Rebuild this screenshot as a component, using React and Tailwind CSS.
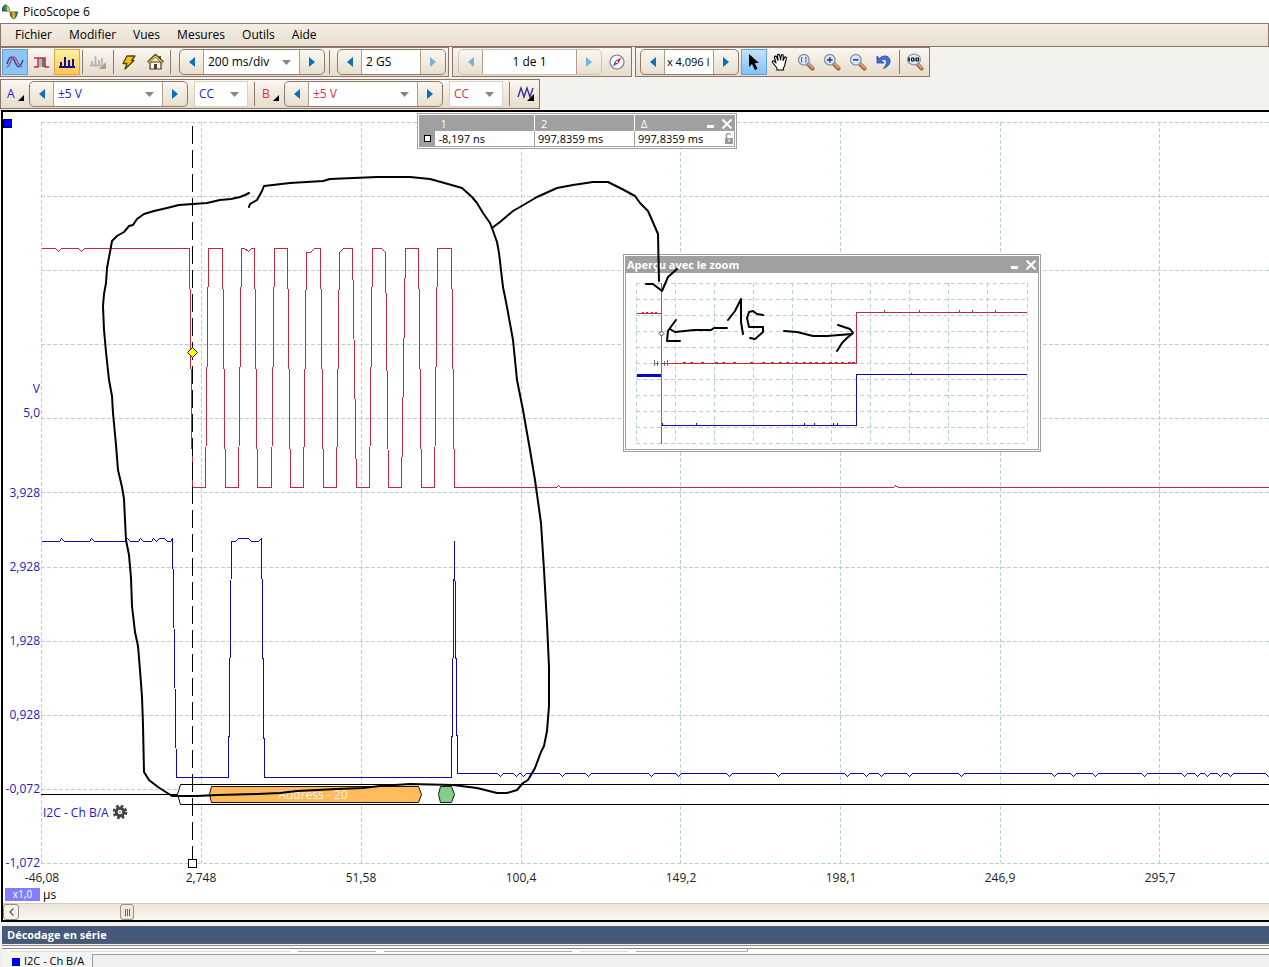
import React from "react";
import { useState } from "react";

const gridX = [41, 201, 361, 521, 680, 840, 1000, 1159, 1319, 1479, 1639, 1799];
const gridY = [122, 196, 270, 344, 418, 492, 567, 641, 715, 789, 863];

const xLabels = [
  { x: 42, text: "-46,08" },
  { x: 201, text: "2,748" },
  { x: 361, text: "51,58" },
  { x: 521, text: "100,4" },
  { x: 681, text: "149,2" },
  { x: 841, text: "198,1" },
  { x: 1000, text: "246,9" },
  { x: 1160, text: "295,7" },
];

const yLabels = [
  { y: 393, text: "V" },
  { y: 417, text: "5,0" },
  { y: 497, text: "3,928" },
  { y: 571, text: "2,928" },
  { y: 645, text: "1,928" },
  { y: 719, text: "0,928" },
  { y: 793, text: "-0,072" },
  { y: 867, text: "-1,072" },
];

const redTrace =
  "41,248 55,248 58,251 61,248 78,248 81,251 84,248 189,248 192,487 205,487 208,248 222,248 225,487 238,487 241,248 244,248 248,251 251,248 254,248 257,487 271,487 274,248 287,248 290,487 303,487 306,252 310,252 314,248 320,248 323,487 336,487 339,252 343,248 352,248 356,487 369,487 372,248 381,248 385,252 388,487 401,487 405,248 418,248 421,487 434,487 437,248 451,248 454,487 556,487 558,485 560,487 893,487 895,485 898,487 2000,487";

const blueStart =
  "41,541 59,541 61,538 64,541 89,541 91,538 94,541 125,541 127,538 130,541 138,541 140,538 143,541 151,541 153,538 156,541 159,538 164,538 167,541 170,541 172,538 176,777 228,777 231,541 235,541 238,538 248,538 251,541 258,541 261,538 264,777 451,777 454,541 457,773";

const dips = [500, 516, 523, 562, 588, 651, 678, 729, 778, 847, 866, 881, 909, 961, 1054, 1073, 1095, 1144, 1184, 1197, 1207, 1220, 1230, 1268];
const blueTrace =
  blueStart + " " + dips.map((x) => `${x - 3},773 ${x},776 ${x + 3},773`).join(" ") + " 2000,773";

// freehand notes drawn over the capture
const notes = [
  "249,193 245,195 240,197 231,199 220,200 207,203 193,204 179,205 167,208 154,211 144,214 137,219 133,225 129,226 124,232 117,236 112,241 110,252 107,268 106,283 104,294 103,306 104,330 106,352 109,380 112,396 113,413 116,445 118,470 122,487 124,499 125,520 126,540 129,555 131,578 132,606 135,632 138,646 140,670 142,697 143,725 144,772 149,780 158,787 172,796 197,796 217,795 257,794 280,793 297,791 337,789 363,788 380,786 410,784 453,785 477,788 497,793 507,793 517,790 523,783 528,780 535,768 541,752 544,746 547,731 549,706 549,667 547,623 544,570 541,523 535,480 530,450 523,410 517,380 513,340 507,307 503,287 499,253 497,242 492,228 490,223 483,213 477,203 472,197 462,188 448,184 430,179 410,177 377,177 330,179 323,181 290,183 264,186 262,191 257,200 250,204 249,207",
  "492,228 500,222 513,211 520,207 537,197 557,188 573,185 593,182 608,182 622,189 635,196 640,203 648,211 655,227 658,234 659,281",
  "646,284 653,284 662,291 668,277 677,269",
  "727,328 714,328 711,330 694,330 675,332 670,329",
  "676,320 670,328 668,331 667,341 680,341",
  "728,320 735,311 741,299 741,322 743,334",
  "763,315 757,314 753,311 749,312 747,318 749,327 763,327 763,332 755,339 750,338",
  "784,331 797,332 813,336 827,336 852,334",
  "838,325 850,329 853,333 847,338 842,343 837,351",
];

function Triangle({ dir, dim }) {
  return (
    <svg width="6" height="10" viewBox="0 0 6 10" aria-hidden="true">
      <path d={dir === "left" ? "M6 0v10L0 5z" : "M0 0v10l6-5z"} fill={dim ? "#7db2d6" : "#0a70b8"} />
    </svg>
  );
}

function Combo({ label, options, color = "text-black", width, frame = "" }) {
  return (
    <div className={`grid items-center bg-white ${width} ${frame}`}>
      <select
        aria-label={label}
        className={`col-start-1 row-start-1 h-full w-full appearance-none bg-transparent pl-1 text-[12px] leading-6 outline-none ${color}`}
      >
        {options.map((o) => (
          <option key={o}>{o}</option>
        ))}
      </select>
      <svg className="pointer-events-none col-start-1 row-start-1 mr-2 justify-self-end" width="9" height="5" viewBox="0 0 9 5" aria-hidden="true">
        <path d="M0 0h9L4.500 5z" fill="#888480" />
      </svg>
    </div>
  );
}

function Field({ label, value, width, align = "text-left" }) {
  const [text, setText] = useState(value);
  return (
    <input
      aria-label={label}
      value={text}
      onChange={(e) => setText(e.target.value)}
      className={`bg-white outline-none ${width} ${align}`}
    />
  );
}

function Spinner({ label, children, leftDim, rightDim }) {
  return (
    <div
      className={`flex h-[26px] overflow-hidden rounded-[5px] border bg-gradient-to-b from-[#faf7f1] to-[#e8dfce] ${
        leftDim && rightDim ? "border-[#cfc4b4]" : "border-[#8d7a6a]"
      }`}
    >
      <button aria-label={`${label} -`} className="flex w-6 items-center justify-center border-r border-[#b0a090]">
        <Triangle dir="left" dim={leftDim} />
      </button>
      {children}
      <button aria-label={`${label} +`} className="flex w-[25px] items-center justify-center border-l border-[#b0a090]">
        <Triangle dir="right" dim={rightDim} />
      </button>
    </div>
  );
}

function Tool({ label, active = "", children }) {
  return (
    <button aria-label={label} className={`flex size-[26px] shrink-0 items-center justify-center ${active}`}>
      {children}
    </button>
  );
}

function Group({ children }) {
  return (
    <div className="flex h-[30px] shrink-0 items-center border border-[#8d7468] bg-gradient-to-b from-[#faf7f1] to-[#e6dcca] px-px">
      {children}
    </div>
  );
}

function Sep() {
  return <div className="mx-0.5 h-6 w-px shrink-0 bg-[#8d7a6a]" />;
}

function Lens({ children }) {
  return (
    <svg width="18" height="18" viewBox="0 0 18 18" aria-hidden="true">
      <path d="M10.500 10.500l5 5" stroke="#8a5a3c" strokeWidth="4" strokeLinecap="round" />
      <path d="M10.800 10.200l4.800 4.800" stroke="#e09a66" strokeWidth="2.400" strokeLinecap="round" />
      <circle cx="6.800" cy="6.800" r="5.300" fill="#dcebf7" stroke="#8797aa" strokeWidth="1.400" />
      {children}
    </svg>
  );
}

function MenuBar() {
  return (
    <nav className="flex h-6 shrink-0 items-center gap-[17px] border border-[#8d7468] bg-gradient-to-b from-[#f3eee4] to-[#e8dfd0] pl-[14px]">
      {["Fichier", "Modifier", "Vues", "Mesures", "Outils", "Aide"].map((m) => (
        <button key={m}>{m}</button>
      ))}
    </nav>
  );
}

function MainTools() {
  return (
    <div className="flex gap-[3px]">
      <Group>
        <Tool label="Oscilloscope" active="border border-[#5ba4dd] bg-[#8cc6f6]">
          <svg width="18" height="14" viewBox="0 0 18 14" fill="none" aria-hidden="true">
            <path d="M1 9C4 0 6 0 9 7s5 6 8-2" stroke="#2a48b0" strokeWidth="1.500" />
            <path d="M1 12C4 12 5 2 8 2s4 10 8 10" stroke="#c84a78" strokeWidth="1.500" />
          </svg>
        </Tool>
        <Tool label="Persistance">
          <svg width="17" height="13" viewBox="0 0 17 13" fill="none" aria-hidden="true">
            <path d="M6 2h6v9H6z" fill="#a4bcc9" />
            <path d="M9 2h3v9H9z" fill="#4e7f96" />
            <path d="M1 11h4V2h7v9h4M1 2h4" stroke="#d02a34" strokeWidth="1.500" />
          </svg>
        </Tool>
        <Tool label="Spectre" active="border border-[#e0a838] bg-gradient-to-b from-[#fff0a8] to-[#ffc94a]">
          <svg width="16" height="12" viewBox="0 0 16 12" fill="none" stroke="#111188" strokeWidth="2" aria-hidden="true">
            <path d="M0 11h16M2 11V6M6 11V1M10 11V4M14 11V3" />
          </svg>
        </Tool>
        <Sep />
        <Tool label="Options du canal">
          <svg width="16" height="14" viewBox="0 0 16 14" fill="none" aria-hidden="true">
            <path d="M0 10.500h12M2 10V6M5.500 10V1M9 10V5M12 10V3" stroke="#b9b4ae" strokeWidth="1.800" />
            <path d="M16 7v7H9z" fill="#a39e98" />
          </svg>
        </Tool>
        <Sep />
        <Tool label="Configuration automatique">
          <svg width="14" height="15" viewBox="0 0 14 15" aria-hidden="true">
            <path d="M5 1h8L9.500 5.500H12L3 14l2-5.500H1z" fill="#f2c21a" stroke="#5d3b0c" strokeWidth="1.300" strokeLinejoin="round" />
          </svg>
        </Tool>
        <Tool label="Accueil">
          <svg width="17" height="16" viewBox="0 0 17 16" aria-hidden="true">
            <path d="M12 2h2v5h-2z" fill="#7c4a28" />
            <path d="M3 8h11v7H3z" fill="#fff6cc" stroke="#4a3a20" strokeWidth="1.200" />
            <path d="M1 8.500L8.500 1.500 16 8.500" fill="none" stroke="#4a3a20" strokeWidth="3" />
            <path d="M1.500 8.500L8.500 2l7 6.500" fill="none" stroke="#f3d24c" strokeWidth="1.200" />
            <path d="M7 10h3v5H7z" fill="#33415c" />
          </svg>
        </Tool>
        <Sep />
        <div className="w-1.5" />
        <Spinner label="Base de temps">
          <Combo label="Base de temps" width="w-[95px]" options={["200 ms/div", "500 ms/div"]} />
        </Spinner>
        <div className="w-0.5" />
        <Sep />
        <div className="w-[5px]" />
        <Spinner label="Échantillons" rightDim>
          <Field label="Échantillons" value="2 GS" width="w-[58px] pl-1" />
        </Spinner>
        <div className="w-px" />
      </Group>
      <Group>
        <div className="w-1" />
        <Spinner label="Tampon" leftDim rightDim>
          <Field label="Tampon" value="1 de 1" width="w-[93px]" align="text-center" />
        </Spinner>
        <div className="w-0.5" />
        <Tool label="Navigateur de tampons">
          <svg width="16" height="16" viewBox="0 0 16 16" aria-hidden="true">
            <circle cx="8" cy="8" r="7" fill="#fff" stroke="#6f7890" strokeWidth="1.200" />
            <path d="M12.500 3.500L9.500 9.500 6.500 6.500z" fill="#e03434" />
            <path d="M3.500 12.500l3-6 3 3z" fill="#4668c4" />
            <circle cx="8" cy="8" r="1" fill="#fff" />
          </svg>
        </Tool>
      </Group>
      <Group>
        <div className="w-[3px]" />
        <Spinner label="Zoom">
          <Field label="Zoom" value="x 4,096 I" width="w-12 pl-0.5 text-[11px]" />
        </Spinner>
        <div className="w-0.5" />
        <Tool label="Sélection" active="border border-[#5ba4dd] bg-gradient-to-b from-[#c4e2fb] to-[#84c0f6]">
          <svg width="12" height="17" viewBox="0 0 12 17" aria-hidden="true">
            <path d="M1 0v13l3-3 3 6 2.500-1.200L6.700 9H11z" fill="#000" />
          </svg>
        </Tool>
        <Tool label="Main">
          <svg width="18" height="18" viewBox="0 0 18 18" aria-hidden="true">
            <path
              d="M6 17v-2L1.500 9.500c-.8-1.200.8-2.300 2-1.200L5 10 3.500 4.500c-.3-1.500 1.500-2 2-.5L7 7.500 6.500 2.500c0-1.500 2-1.500 2.300 0L9.500 7l.8-4.500c.3-1.300 2.100-1 2 .5L12 7.500l1.500-3c.7-1.200 2.200-.5 1.800 1L14 11c0 2-1 3-1.500 4v2z"
              fill="#fff"
              stroke="#000"
              strokeWidth="1.100"
              strokeLinejoin="round"
            />
          </svg>
        </Tool>
        <Tool label="Zoom sur une zone">
          <Lens>
            <path d="M5.500 4.500h-1v4.500h1M8 4.500h1v4.500h-1" fill="none" stroke="#4458a0" />
          </Lens>
        </Tool>
        <Tool label="Zoom avant">
          <Lens>
            <path d="M4 6.800h5.600M6.800 4v5.600" stroke="#3a4a9c" strokeWidth="1.800" />
          </Lens>
        </Tool>
        <Tool label="Zoom arrière">
          <Lens>
            <path d="M4 6.800h5.600" stroke="#3a4a9c" strokeWidth="1.800" />
          </Lens>
        </Tool>
        <Tool label="Annuler le zoom">
          <svg width="16" height="16" viewBox="0 0 16 16" aria-hidden="true">
            <path d="M1 2v7h7L5.500 6.500c2-2 5-1.500 5 1.500 0 2-1 4-3 6.500 5-2 7-5 6.500-8.500C13.300 1.500 7 .5 3.500 4.500z" fill="#3f6fd8" stroke="#2745a0" strokeWidth=".8" />
          </svg>
        </Tool>
        <Sep />
        <Tool label="Zoom 100">
          <svg width="18" height="18" viewBox="0 0 18 18" aria-hidden="true">
            <path d="M11 10.500l4.500 5" stroke="#8a5a3c" strokeWidth="4" strokeLinecap="round" />
            <path d="M11.300 10.300l4.300 4.700" stroke="#e09a66" strokeWidth="2.400" strokeLinecap="round" />
            <ellipse cx="8" cy="6.500" rx="6.500" ry="5.300" fill="#dcebf7" stroke="#8797aa" strokeWidth="1.200" />
            <path d="M3 4.500v4" stroke="#000" strokeWidth="1.400" />
            <rect x="5.500" y="5" width="2.500" height="3" rx=".8" fill="none" stroke="#000" strokeWidth="1.200" />
            <rect x="10" y="5" width="2.500" height="3" rx=".8" fill="none" stroke="#000" strokeWidth="1.200" />
          </svg>
        </Tool>
      </Group>
    </div>
  );
}

function Channel({ name, color }) {
  return (
    <>
      <button aria-label={`Canal ${name}`} className={`flex w-[27px] items-center justify-between px-[5px] ${color}`}>
        {name}
        <svg className="mt-2" width="6" height="6" viewBox="0 0 6 6" aria-hidden="true">
          <path d="M6 0v6H0z" fill="#000" />
        </svg>
      </button>
      <Spinner label={`Plage ${name}`}>
        <Combo label={`Plage ${name}`} width="w-[108px]" options={["±5 V", "±10 V"]} color={color} />
      </Spinner>
      <div className="w-1.5" />
      <Combo label={`Couplage ${name}`} width="h-[26px] w-[54px]" frame="border border-[#d8cfc0]" options={["CC", "CA"]} color={color} />
      <div className="w-1" />
      <Sep />
    </>
  );
}

function ChannelTools() {
  return (
    <div className="flex">
      <Group>
        <Channel name="A" color="text-[#2a20d0]" />
        <Channel name="B" color="text-[#dc3048]" />
        <Tool label="Canaux numériques">
          <svg width="17" height="16" viewBox="0 0 17 16" fill="none" aria-hidden="true">
            <path d="M1 11L4 2l3 9 3-9 3 9 3-9" stroke="#34349a" strokeWidth="1.400" />
            <path d="M17 8v7h-7z" fill="#000" />
          </svg>
        </Tool>
      </Group>
    </div>
  );
}

function Scope() {
  return (
    <svg className="absolute inset-0 size-full" aria-label="Signal">
      <g transform="translate(-3 -112)" fontSize="12">
        <g stroke="#b2d3de" strokeDasharray="4 2" shapeRendering="crispEdges">
          {gridX.map((x) => (
            <path key={x} d={`M${x + 0.5} 122V863`} />
          ))}
          {gridY.map((y) => (
            <path key={y} d={`M41 ${y + 0.5}H2000`} />
          ))}
        </g>
        <rect x="3" y="119" width="9" height="9" fill="#000060" />
        <rect x="4" y="120" width="7" height="7" fill="#0000ff" />

        <g fill="none" shapeRendering="crispEdges">
          <polyline points={redTrace} stroke="#c8283c" transform="translate(.5 .5)" />
          <polyline points={blueTrace} stroke="#1408b0" transform="translate(.5 .5)" />
        </g>

        {/* decoded bus */}
        <path d="M2000 784.500H180.500L177.500 794.500 180.500 804.500H2000" fill="#fff" fillOpacity=".85" stroke="#000" />
        <path d="M41 794.500H177" stroke="#000" />
        <path d="M211.500 786.500h207l3 8-3 8h-207l-2-8z" fill="#ffbb5c" stroke="#201000" />
        <path d="M440.500 786.500h11l3 8-3 8h-11l-2-8z" fill="#86cc8c" stroke="#102010" />
        <text x="313" y="799" textAnchor="middle" fill="#fdf3e4">Address - 20</text>

        <path d="M192.500 126V859" stroke="#000" strokeDasharray="18 6" />
        <rect x="188.500" y="859.500" width="8" height="8" fill="#fff" stroke="#000" />
        <path d="M192.500 347.500l5 5-5 5-5-5z" fill="#ff0" stroke="#222" />

        <g fill="#2318c4" textAnchor="end">
          {yLabels.map((l) => (
            <text key={l.text} x="40" y={l.y}>{l.text}</text>
          ))}
        </g>
        <text x="43" y="817" fill="#2318c4">I2C - Ch B/A</text>
        <g transform="translate(120 812)" fill="none" stroke="#444">
          <circle r="3.800" strokeWidth="3" />
          <circle r="6" strokeWidth="2.600" strokeDasharray="2.700 2.012" />
          <circle r=".8" fill="#444" stroke="none" />
        </g>
        <g fill="#222" textAnchor="middle">
          {xLabels.map((l) => (
            <text key={l.text} x={l.x} y="882">{l.text}</text>
          ))}
        </g>
      </g>
    </svg>
  );
}

function WindowButtons() {
  return (
    <span className="flex items-center gap-2">
      <button aria-label="Réduire" className="flex h-3 items-end">
        <span className="mb-0.5 block h-[3px] w-[7px] bg-white" />
      </button>
      <button aria-label="Fermer">
        <svg width="10" height="10" viewBox="0 0 10 10" stroke="#fff" strokeWidth="2" aria-hidden="true">
          <path d="M.5.5l9 9M9.500.5l-9 9" />
        </svg>
      </button>
    </span>
  );
}

function Rulers() {
  return (
    <div className="absolute left-[414px] top-px w-[320px] border border-[#a0a0a0] bg-white p-px">
      <table className="w-full table-fixed border-collapse border border-[#a0a0a0] text-[11px] leading-[15px]">
        <colgroup>
          <col className="w-[15px]" />
          <col className="w-[100px]" />
          <col className="w-[100px]" />
          <col />
        </colgroup>
        <thead>
          <tr className="h-[15px] bg-[#a0a0a0] text-left text-white">
            <td className="p-0" />
            <th className="p-0 pl-1.5 font-normal">1</th>
            <th className="border-l border-white p-0 pl-1.5 font-normal">2</th>
            <th className="border-l border-white p-0 pl-1.5 font-normal">
              <span className="flex h-[15px] items-center justify-between pr-0.5">
                Δ
                <WindowButtons />
              </span>
            </th>
          </tr>
        </thead>
        <tbody>
          <tr className="h-[15px]">
            <td className="bg-[#a0a0a0] p-0">
              <span className="mx-auto block size-[7px] border border-black bg-white" />
            </td>
            <td className="p-0 pl-1">-8,197 ns</td>
            <td className="border-l border-[#a0a0a0] p-0 pl-[3px]">997,8359 ms</td>
            <td className="border-l border-[#a0a0a0] p-0 pl-[3px]">
              <span className="flex items-center justify-between pr-px">
                997,8359 ms
                <svg width="8" height="11" viewBox="0 0 8 11" fill="none" aria-hidden="true">
                  <path d="M1.500 5V3a2 2 0 0 1 4-1" stroke="#999" strokeWidth="1.400" />
                  <path d="M0 5h8v6H0z" fill="#999" />
                  <path d="M4 6v3" stroke="#fff" />
                </svg>
              </span>
            </td>
          </tr>
        </tbody>
      </table>
    </div>
  );
}

const miniX = [637, 676, 715, 754, 793, 832, 871, 910, 949, 988, 1028];
const miniY = [283, 299, 315, 331, 347, 363, 379, 395, 411, 427, 443];
const redTicks = [642, 646, 651, 655, 683, 690, 701, 715, 722, 733, 750, 762, 771, 779, 786, 795, 803, 809, 815, 822, 829, 835, 841, 848, 852];

function Overview() {
  return (
    <section className="absolute left-[620px] top-[142px] w-[418px] border border-[#a0a0a0] bg-white p-px">
      <div className="border border-[#a0a0a0]">
        <header className="flex h-4 items-center justify-between bg-[#a0a0a0] pl-px pr-0.5 text-[11px] font-bold text-white">
          <h2>Aperçu avec le zoom</h2>
          <WindowButtons />
        </header>
        <svg className="block h-[176px] w-full" aria-label="Aperçu">
          <g transform="translate(-626 -273)" fill="none" shapeRendering="crispEdges">
            <g stroke="#b2d3de" strokeDasharray="4 3">
              {miniX.map((x) => (
                <path key={x} d={`M${x - 0.5} 283V443`} />
              ))}
              {miniY.map((y) => (
                <path key={y} d={`M636 ${y + 0.5}H1028`} />
              ))}
            </g>
            <path d="M637 313.500H661M662 363.500H856.500V312.500H1027" stroke="#c8283c" />
            {redTicks.map((x) => (
              <path key={x} d={x < 660 ? `M${x} 312.500h2` : `M${x} 362.500h3`} stroke="#c8283c" />
            ))}
            <path d="M884.500 310v2M919.500 310v2M959.500 310v2M972.500 310v2M995.500 310v2" stroke="#c8283c" />
            <path d="M637 375.500H661" stroke="#0808c8" strokeWidth="3" />
            <path d="M662.500 423V425.500H856.500V374.500H1027M696.500 423v2M804.500 423v2M814.500 423v2M833.500 423v2M837.500 423v2M911.500 373v1" stroke="#1408b0" />
            <path d="M661.500 283V444" stroke="#707070" />
            <path d="M654.500 360v6M655 363.500h4M657.500 361v5M664.500 361v5M667.500 360v6" stroke="#707070" />
            <path d="M661.500 331l2.500 2.500-2.500 2.500-2.500-2.500z" fill="#fff" stroke="#334" shapeRendering="auto" />
          </g>
        </svg>
      </div>
    </section>
  );
}

function Notes() {
  return (
    <svg className="pointer-events-none absolute inset-0 size-full" aria-hidden="true">
      <g transform="translate(-3 -112)" fill="none" stroke="#000" strokeWidth="2" strokeLinejoin="round" strokeLinecap="round">
        {notes.map((n) => (
          <polyline key={n} points={n} />
        ))}
      </g>
    </svg>
  );
}

function ScrollBar() {
  return (
    <div className="flex h-[17px] shrink-0 items-center border-t border-[#d4cdbd] bg-gradient-to-b from-[#ebe5d8] to-[#fbf9f3]">
      <button aria-label="Défiler à gauche" className="flex h-4 w-4 items-center justify-center rounded-[3px] border border-[#9c8f7c] bg-[#f5f1e8]">
        <svg width="5" height="8" viewBox="0 0 5 8" fill="none" stroke="#555" strokeWidth="1.200" aria-hidden="true">
          <path d="M4.500.5L1 4l3.500 3.500" />
        </svg>
      </button>
      <button aria-label="Position" className="ml-[101px] flex h-4 w-[14px] items-center justify-center gap-px rounded-[3px] border border-[#9c8f7c] bg-[#f0eadd]">
        <span className="h-[7px] w-px bg-[#6b6255]" />
        <span className="h-[7px] w-px bg-[#6b6255]" />
        <span className="h-[7px] w-px bg-[#6b6255]" />
      </button>
    </div>
  );
}

function Decoding() {
  return (
    <section className="h-[45px] shrink-0 overflow-hidden bg-[#f0f0f0] pl-0.5 pt-1">
      <h2 className="h-[18px] border-y border-[#5c5c64] bg-[#44597c] pl-[5px] text-[11px] font-bold leading-4 text-white">
        Décodage en série
      </h2>
      <div className="mt-px h-1 border-y border-[#8e8a84] bg-[#faf9f6]" />
      <div className="ml-1 flex h-[3px] gap-2 bg-[#fbfaf8] pl-1">
        <div className="w-[280px] border-b border-[#dedad4]" />
        <div className="w-[78px] border-b border-[#b4b0aa]" />
        <div className="w-[188px] border-b border-[#b4b0aa]" />
        <div className="w-[48px] border-b border-[#dedad4]" />
        <div className="w-[112px] border-b border-r border-[#b4b0aa]" />
      </div>
      <div className="flex items-start bg-[#fafafa]">
        <button className="flex h-4 w-[90px] shrink-0 items-end gap-1 whitespace-nowrap bg-[#f4f4f4] pl-[10px] text-[11px] leading-[15px]">
          <span className="mb-0.5 size-2 shrink-0 bg-[#0000ff]" />
          I2C - Ch B/A
        </button>
        <div className="mt-0.5 h-5 flex-1 border-l border-t border-[#9c9c9c] bg-[#efefef]" />
      </div>
    </section>
  );
}

export default function App() {
  return (
    <div className="flex h-screen flex-col overflow-hidden bg-white font-['Open_Sans','Noto_Sans',sans-serif] text-[12px] leading-4 text-black">
      <header className="flex h-[23px] shrink-0 items-center gap-[5px] pl-0.5">
        <svg width="16" height="16" viewBox="0 0 16 16" aria-hidden="true">
          <path d="M0 7C1-1 6-1 7.500 7z" fill="#38a838" stroke="#222" strokeWidth=".8" />
          <path d="M0 7C.5 3 1.500 1.500 2.500 1.300V7z" fill="#2848a8" />
          <path d="M5 2c1.500 1.500 2 3 2.500 5H5z" fill="#e8d020" />
          <path d="M8 8c1 9 6 9 7.500 0z" fill="#38a838" stroke="#222" strokeWidth=".8" />
          <path d="M8 8c.5 3 1 5 2.500 6V8z" fill="#d84020" />
          <path d="M10.500 8h2v6.500h-2z" fill="#e8c020" />
        </svg>
        <h1>PicoScope 6</h1>
      </header>
      <MenuBar />
      <div className="flex shrink-0 flex-col gap-0.5 bg-[#f4f2ee] pb-px">
        <MainTools />
        <ChannelTools />
      </div>
      <main className="ml-px flex min-h-0 flex-1 flex-col border-y-2 border-l-2 border-black">
        <div className="relative min-h-0 flex-1 overflow-hidden">
          <Scope />
          <Rulers />
          <Overview />
          <Notes />
        </div>
        <div className="flex h-[15px] shrink-0 items-start gap-[3px] pl-0.5">
          <span className="h-[13px] w-[35px] bg-[#8080ff] text-center text-[10px] leading-[13px] text-white">x1,0</span>
          <span className="leading-[14px]">µs</span>
        </div>
        <ScrollBar />
      </main>
      <Decoding />
    </div>
  );
}
